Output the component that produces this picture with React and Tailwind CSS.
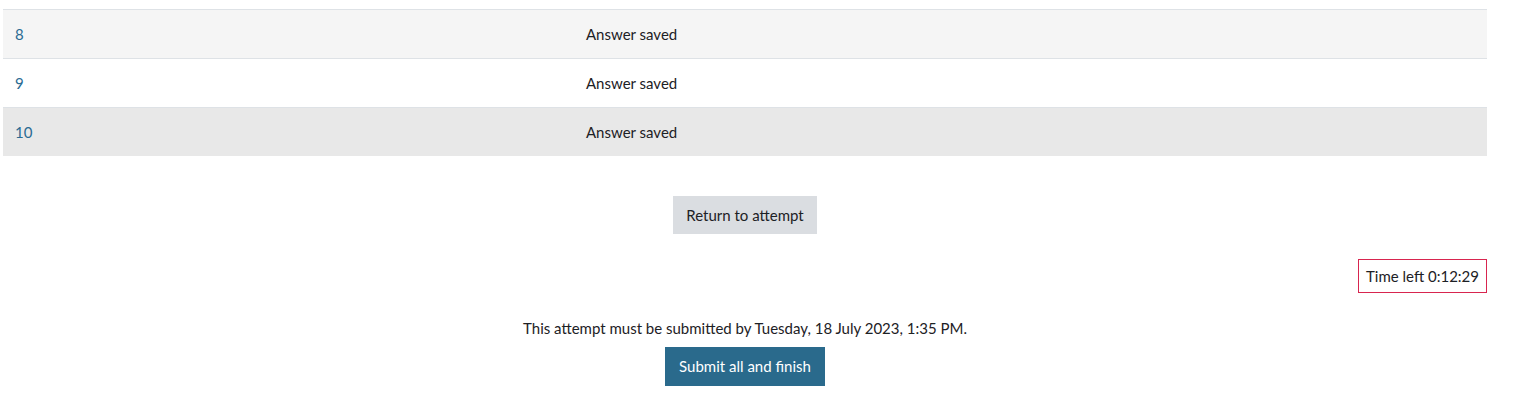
export default function App() {
  const rows = [
    { n: "8", bg: "bg-[#f5f5f5]" },
    { n: "9", bg: "bg-white" },
    { n: "10", bg: "bg-[#e8e8e8]" },
  ];
  return (
    <div className="w-[1517px] h-[406px] bg-white text-[#1d2125] text-[15px]" style={{ fontFamily: '"Lato", "Noto Sans", sans-serif' }}>
      <div className="w-[1484px] ml-[3px] pt-[9px]">
        <div>
          {rows.map((r) => (
            <div key={r.n} className={`flex h-[49px] items-center border-t border-[#dee2e6] ${r.bg}`}>
              <div className="w-[571px] pl-[12px] text-[#2a6b93]">{r.n}</div>
              <div className="pl-[12px]">Answer saved</div>
            </div>
          ))}
        </div>
        <div className="flex justify-center mt-[40px]">
          <button className="h-[38px] px-[13px] bg-[#dadde1] text-[#1d2125]">Return to attempt</button>
        </div>
        <div className="flex justify-end mt-[25px]">
          <div className="h-[34px] px-[7px] flex items-center border border-[#d8254f]">Time left 0:12:29</div>
        </div>
        <div className="text-center mt-[24px] leading-[22px]">This attempt must be submitted by Tuesday, 18 July 2023, 1:35 PM.</div>
        <div className="flex justify-center mt-[8px]">
          <button className="h-[39px] px-[14px] bg-[#2a6a8c] text-white">Submit all and finish</button>
        </div>
      </div>
    </div>
  );
}
